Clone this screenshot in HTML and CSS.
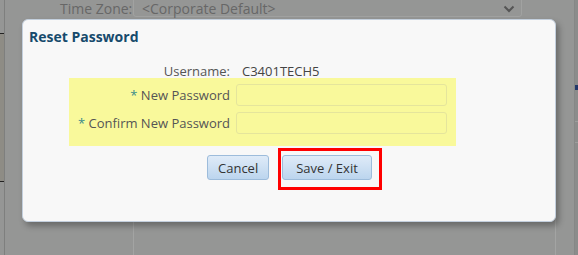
FILE: index.html
```html
<!DOCTYPE html>
<html lang="en">
<head>
    <meta charset="UTF-8">
    <title>Reset Password</title>
    <link rel="stylesheet" href="styles.css">
</head>
<body>
    <div class="page">
        <div class="rail-left">
            <div class="rail-panel"></div>
        </div>
        <div class="main">
            <div class="tz-row">
                <span class="tz-label">Time Zone:</span>
                <div class="tz-select">
                    <span>&lt;Corporate Default&gt;</span>
                    <svg class="chevron" width="12" height="8" viewBox="0 0 12 8">
                        <path d="M1.5 1.5 L6 6 L10.5 1.5" fill="none" stroke="#555" stroke-width="2"/>
                    </svg>
                </div>
            </div>
            <div class="main-lower"></div>
        </div>
        <div class="rail-right">
            <div class="rail-mark"></div>
            <div class="rail-line"></div>
            <div class="rail-line"></div>
        </div>
    </div>

    <div class="dialog">
        <h2 class="dialog-title">Reset Password</h2>

        <div class="form">
            <div class="row info">
                <span class="label">Username:</span>
                <span class="value">C3401TECH5</span>
            </div>

            <div class="required">
                <div class="row">
                    <label class="label" for="new-pw"><span class="star">*</span> New Password</label>
                    <input type="password" id="new-pw">
                </div>
                <div class="row">
                    <label class="label" for="confirm-pw"><span class="star">*</span> Confirm New Password</label>
                    <input type="password" id="confirm-pw">
                </div>
            </div>
        </div>

        <div class="actions">
            <button class="btn btn-cancel">Cancel</button>
            <button class="btn btn-save">Save / Exit</button>
        </div>

        <div class="highlight"></div>
    </div>
</body>
</html>
```

FILE: styles.css
```css
body {
    margin: 0;
    height: 255px;
    overflow: hidden;
    background-color: #959695;
    font-family: 'Open Sans', 'Noto Sans', sans-serif;
    font-size: 13px;
}

.page {
    display: flex;
    height: 255px;
    overflow: hidden;
}

/* dimmed page behind the dialog */
.rail-left {
    width: 4px;
    border-right: 1px solid #7e7f7e;
    padding-top: 33px;
}

.rail-panel {
    height: 147px;
    background-color: #8e8c85;
    border-top: 1px solid #222;
    border-bottom: 1px solid #222;
}

.main {
    flex: 1;
}

.tz-row {
    display: flex;
    height: 21px;
    margin-top: -4px;
    padding-left: 55px;
    color: #676767;
    font-size: 14px;
}

.tz-label {
    width: 73px;
    padding-top: 4px;
    line-height: 17px;
}

.tz-select {
    display: flex;
    align-items: center;
    justify-content: space-between;
    box-sizing: border-box;
    width: 389px;
    height: 21px;
    padding: 3px 6px 0 8px;
    border: 1px solid #a1a2a1;
    border-radius: 3px;
}

.chevron {
    margin-top: 1px;
}

.main-lower {
    height: 80px;
    margin: 160px 18px 0 128px;
    border-left: 1px solid #a3a4a3;
    border-right: 1px solid #a3a4a3;
}

.rail-right {
    width: 3px;
    border-left: 1px solid #868786;
    background-color: #8b8c8b;
    padding-top: 85px;
}

.rail-mark {
    height: 5px;
    background-color: #23386a;
}

.rail-line {
    height: 1px;
    margin-top: 31px;
    background-color: #9c9d9c;
}

.rail-line + .rail-line {
    margin-top: 20px;
}

/* dialog */
.dialog {
    position: absolute;
    left: 22px;
    top: 19px;
    width: 534px;
    height: 203px;
    box-sizing: border-box;
    background-color: #f8f8f8;
    border: 1px solid #c3cfdd;
    border-radius: 6px;
    box-shadow: 3px 4px 6px rgba(0, 0, 0, 0.3);
}

.dialog-title {
    margin: 0;
    padding: 8px 0 0 6px;
    font-size: 14px;
    line-height: 17px;
    font-weight: bold;
    color: #164a6c;
}

.form {
    margin: 18px 0 0 46px;
}

.row {
    display: grid;
    grid-template-columns: 161px 211px;
    column-gap: 6px;
    align-items: center;
}

.label {
    text-align: right;
    color: #555;
}

.info {
    grid-template-columns: 161px auto;
    column-gap: 12px;
    line-height: 17px;
}

.value {
    color: #444;
}

.star {
    color: #3a8c8c;
}

.required {
    width: 387px;
    margin-top: -2px;
    padding: 6px 0 12px;
    box-sizing: border-box;
    background-color: #f9f99b;
    display: flex;
    flex-direction: column;
    gap: 6px;
}

input {
    height: 22px;
    box-sizing: border-box;
    padding: 2px 4px;
    background-color: #f9f99b;
    border: 1px solid #e5e59c;
    border-radius: 3px;
}

.actions {
    display: flex;
    gap: 13px;
    margin: 9px 0 0 184px;
}

.btn {
    height: 25px;
    box-sizing: border-box;
    padding: 0 10px;
    font-family: inherit;
    font-size: 13px;
    color: #333;
    background: linear-gradient(#dfebf8, #bcd5ee);
    border: 1px solid #9dbcdb;
    border-radius: 3px;
}

.btn-save {
    width: 90px;
}

.btn-cancel {
    width: 62px;
}

/* red annotation around the save button */
.highlight {
    position: absolute;
    left: 255px;
    top: 128px;
    width: 104px;
    height: 42px;
    box-sizing: border-box;
    border: 3px solid #f00;
}
```
